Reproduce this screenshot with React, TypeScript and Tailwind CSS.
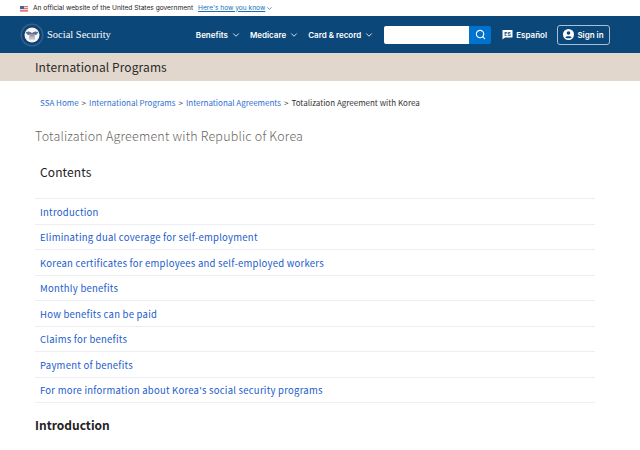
import { ChevronDown, Search } from "lucide-react";

const contents = [
  "Introduction",
  "Eliminating dual coverage for self-employment",
  "Korean certificates for employees and self-employed workers",
  "Monthly benefits",
  "How benefits can be paid",
  "Claims for benefits",
  "Payment of benefits",
  "For more information about Korea's social security programs",
];

function Flag() {
  return (
    <svg width="8" height="6" viewBox="0 0 8 6" className="shrink-0">
      <rect width="8" height="6" fill="#f0d8d8" />
      <rect y="0" width="8" height="1" fill="#e0767e" />
      <rect y="2" width="8" height="1" fill="#e0767e" />
      <rect y="4" width="8" height="1" fill="#e0767e" />
      <rect y="5" width="8" height="1" fill="#e8a0a4" />
      <rect width="4" height="3" fill="#4a5f9e" />
    </svg>
  );
}

function Seal() {
  return (
    <svg width="24" height="24" viewBox="0 0 24 24" className="shrink-0">
      <circle cx="12" cy="12" r="11.5" fill="#2f6190" />
      <circle cx="12" cy="12" r="10" fill="#123f70" />
      <circle cx="12" cy="12" r="7.5" fill="#f4f6f8" />
      <path d="M5.5 9.5 C8 8 10 8.5 12 10 C14 8.5 16 8 18.5 9.5 L16 12 L8 12 Z" fill="#5d7391" />
      <rect x="9" y="11.5" width="6" height="5" fill="#b8c2d0" />
      <rect x="10" y="12" width="4" height="1.5" fill="#c9818a" />
    </svg>
  );
}

function NavItem({ label }: { label: string }) {
  return (
    <a className="flex items-center gap-[3px] text-[8px] font-semibold text-white">
      {label}
      <ChevronDown size={10} strokeWidth={2} />
    </a>
  );
}

export default function App() {
  return (
    <div className="h-[450px] w-[640px] overflow-hidden bg-white font-['Noto_Sans_CJK_KR',sans-serif]">
      <div className="flex h-4 items-center gap-[5px] bg-white pl-5 pt-[1px] font-['Inter',sans-serif] text-[6.6px] text-[#1b1b1b]">
        <Flag />
        <span>An official website of the United States government</span>
        <a className="flex items-center gap-[1px] text-[#1a6fb5] underline">
          Here's how you know
          <ChevronDown size={7} strokeWidth={2.5} />
        </a>
      </div>

      <header className="flex h-[37px] items-center bg-[#0b4778] pl-5 pr-[30px] font-['Inter',sans-serif]">
        <Seal />
        <span className="ml-[3px] font-['Liberation_Serif',serif] text-[10.5px] font-medium text-white">Social Security</span>
        <nav className="ml-auto flex items-center gap-[9px]">
          <NavItem label="Benefits" />
          <NavItem label="Medicare" />
          <NavItem label="Card & record" />
        </nav>
        <div className="ml-[10px] flex h-[18px] overflow-hidden rounded-[2px]">
          <div className="w-[85px] bg-white" />
          <button className="flex w-[22px] items-center justify-center bg-[#0073cf] text-white">
            <Search size={11} strokeWidth={2.5} />
          </button>
        </div>
        <div className="ml-[11px] flex items-center gap-[3px] text-[8px] font-semibold text-white">
          <svg width="11" height="11" viewBox="0 0 11 11" className="shrink-0">
            <path d="M0.5 1 H10.5 V8.5 H3 L0.5 10.5 Z" fill="#ffffff" />
            <text x="5.5" y="6.6" textAnchor="middle" fontSize="5" fontWeight="700" fill="#0b4778">ES</text>
          </svg>
          Español
        </div>
        <button className="ml-[10px] flex h-[20px] w-[53px] items-center justify-center gap-[3px] rounded-[3px] border border-[#a9c0d6] text-[8px] font-semibold text-white">
          <svg width="11" height="11" viewBox="0 0 11 11" className="shrink-0">
            <circle cx="5.5" cy="5.5" r="5.5" fill="#ffffff" />
            <circle cx="5.5" cy="4" r="1.8" fill="#0b4778" />
            <path d="M2.2 8.3 C3 6.8 8 6.8 8.8 8.3 C7.5 9.7 3.5 9.7 2.2 8.3 Z" fill="#0b4778" />
          </svg>
          Sign in
        </button>
      </header>

      <div className="flex h-[28px] items-center bg-[#e1d7cd] pl-[35px] text-[12px] tracking-[0.1px] text-[#2c2a28]">International Programs</div>

      <main className="px-[35px]">
        <div className="flex h-[42px] items-center gap-[3px] pl-[5px] pt-[1px] text-[8px] text-[#333]">
          <a className="text-[#2f6fd0]">SSA Home</a>
          <span>&gt;</span>
          <a className="text-[#2f6fd0]">International Programs</a>
          <span>&gt;</span>
          <a className="text-[#2f6fd0]">International Agreements</a>
          <span>&gt;</span>
          <span>Totalization Agreement with Korea</span>
        </div>
        <h1 className="mt-[3px] text-[12.5px] font-light leading-[20px] tracking-[0.2px] text-[#6b6661]">Totalization Agreement with Republic of Korea</h1>
        <h2 className="mt-[16px] pl-[5px] text-[12px] leading-[20px] tracking-[0.1px] text-[#222]">Contents</h2>
        <ul className="mt-[16px] w-[560px] border-t border-[#eceef2]">
          {contents.map((item) => (
            <li key={item} className="flex h-[25.5px] items-center border-b border-[#eceef2] pl-[5px] pt-[1px] text-[9.5px] tracking-[0.25px] text-[#1a5ccc]">
              {item}
            </li>
          ))}
        </ul>
        <h2 className="mt-[12px] text-[12px] font-bold leading-[20px] text-[#222]">Introduction</h2>
      </main>
    </div>
  );
}
